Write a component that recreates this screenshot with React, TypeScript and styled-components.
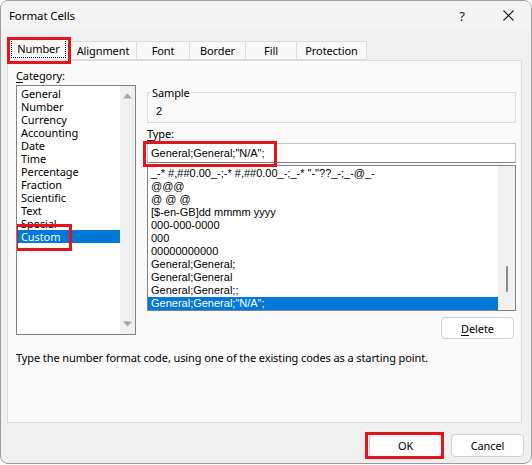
import React from 'react';
import styled, { createGlobalStyle } from 'styled-components';

const UI = `"Noto Sans", "Open Sans", sans-serif`;
const MS = `"Liberation Sans", Arial, sans-serif`;
const RED = '#e3141c';

const GlobalStyle = createGlobalStyle`
  html, body { margin: 0; padding: 0; background: #ffffff; }
  body { width: 532px; height: 465px; overflow: hidden; }
  * { box-sizing: border-box; }
`;

const Window = styled.div`
  width: 532px;
  height: 464px;
  border: 1px solid #9c9c9c;
  border-radius: 8px;
  background: #f0f0f0;
  display: flex;
  flex-direction: column;
  font-family: ${UI};
  font-size: 11px;
  letter-spacing: -0.1px;
  color: #000;
  overflow: hidden;
`;

const TitleBar = styled.div`
  height: 29px;
  display: flex;
  align-items: center;
  padding-left: 8px;
  background: #f3f3f3;
`;

const Title = styled.div`
  flex: 1;
  font-size: 11.5px;
  line-height: 15px;
`;

const CaptionButton = styled.div`
  width: 46px;
  height: 29px;
  display: flex;
  align-items: center;
  justify-content: center;
  font-size: 13px;
  color: #1a1a1a;
`;

const TabRow = styled.div`
  display: flex;
  align-items: flex-end;
  margin-left: 6px;
  padding-top: 7px;
`;

const Tab = styled.div<{ $w: number; $active?: boolean }>`
  position: relative;
  width: ${(p) => p.$w}px;
  height: ${(p) => (p.$active ? 24 : 19)}px;
  margin-bottom: ${(p) => (p.$active ? -1 : 0)}px;
  margin-right: -1px;
  z-index: ${(p) => (p.$active ? 2 : 1)};
  display: flex;
  align-items: center;
  justify-content: center;
  background: ${(p) => (p.$active ? '#f9f9f9' : '#f7f7f7')};
  border: 1px solid #dcdcdc;
  border-bottom: ${(p) => (p.$active ? 'none' : '1px solid #dcdcdc')};
  line-height: 15px;
  padding-bottom: ${(p) => (p.$active ? 2 : 0)}px;
`;

const FocusRect = styled.span`
  border: 1px dotted #000;
  padding: 1px 5px;
  line-height: 15px;
`;

const Annot = styled.span<{ $l: number; $t: number; $w: number; $h: number }>`
  position: absolute;
  left: ${(p) => p.$l}px;
  top: ${(p) => p.$t}px;
  width: ${(p) => p.$w}px;
  height: ${(p) => p.$h}px;
  border: 3px solid ${RED};
  pointer-events: none;
  z-index: 5;
`;

const Panel = styled.div`
  margin-left: 6px;
  width: 515px;
  height: 363px;
  border: 1px solid #dadada;
  background: #f9f9f9;
  padding: 7px 5px 0 8px;
  display: flex;
  flex-direction: column;
`;

const Columns = styled.div`
  display: grid;
  grid-template-columns: 120px 369px;
  column-gap: 11px;
`;

const Column = styled.div<{ $pt?: number }>`
  display: flex;
  flex-direction: column;
  padding-top: ${(p) => p.$pt ?? 0}px;
`;

const Label = styled.div<{ $mt?: number; $mb?: number }>`
  line-height: 15px;
  margin-top: ${(p) => p.$mt ?? 0}px;
  margin-bottom: ${(p) => p.$mb ?? 0}px;
`;

const U = styled.span`
  text-decoration: underline;
  text-underline-offset: 2px;
`;

const ListBox = styled.div<{ $h: number; $mt?: number }>`
  height: ${(p) => p.$h}px;
  margin-top: ${(p) => p.$mt ?? 0}px;
  border: 1px solid #828282;
  background: #fff;
  display: flex;
`;

const Items = styled.div<{ $font: 'ui' | 'ms'; $pt: number }>`
  flex: 1;
  display: flex;
  flex-direction: column;
  padding-top: ${(p) => p.$pt}px;
  font-family: ${(p) => (p.$font === 'ms' ? MS : UI)};
  font-size: 11px;
  letter-spacing: ${(p) => (p.$font === 'ms' ? '0' : '-0.1px')};
  overflow: hidden;
`;

const Item = styled.div<{ $sel?: boolean; $pl: number }>`
  position: relative;
  height: 13px;
  line-height: 13px;
  padding-left: ${(p) => p.$pl}px;
  white-space: pre;
  background: ${(p) => (p.$sel ? '#0078d7' : 'transparent')};
  color: ${(p) => (p.$sel ? '#fff' : '#000')};
`;

const ArrowTrack = styled.div`
  width: 15px;
  background: #f0f0f0;
  display: flex;
  flex-direction: column;
  justify-content: space-between;
  align-items: center;
  padding: 7px 0 7px;
`;

const SlimTrack = styled.div`
  width: 17px;
  background: #f0f0f0;
  display: flex;
  flex-direction: column;
  align-items: center;
  padding-top: 100px;
`;

const Thumb = styled.div`
  width: 2px;
  height: 26px;
  background: #8a8a8a;
  border-radius: 1px;
`;

const GroupBox = styled.fieldset`
  margin: 0;
  padding: 4px 8px 3px;
  border: 1px solid #dcdcdc;
  min-width: 0;
`;

const Legend = styled.legend`
  margin-left: -5px;
  padding: 0 1px;
  line-height: 15px;
`;

const SampleValue = styled.div`
  font-family: ${MS};
  font-size: 11px;
  line-height: 15px;
`;

const TextBoxWrap = styled.div`
  position: relative;
  margin-top: 2px;
`;

const TextBox = styled.div`
  height: 20px;
  border: 1px solid #c4c4c4;
  border-bottom-color: #7f7f7f;
  background: #fff;
  font-family: ${MS};
  font-size: 11px;
  letter-spacing: 0;
  line-height: 18px;
  padding-left: 3px;
`;

const ButtonRow = styled.div<{ $mt: number }>`
  display: flex;
  justify-content: flex-end;
  margin-top: ${(p) => p.$mt}px;
`;

const Button = styled.div<{ $w: number; $h: number }>`
  position: relative;
  width: ${(p) => p.$w}px;
  height: ${(p) => p.$h}px;
  border: 1px solid #d0d0d0;
  border-radius: 4px;
  background: #fdfdfd;
  display: flex;
  align-items: center;
  justify-content: center;
  line-height: 15px;
`;

const DeleteRow = styled(ButtonRow)`
  padding-right: 2px;
`;

const Description = styled.div`
  margin-top: 11px;
  line-height: 15px;
`;

const Footer = styled.div`
  display: flex;
  justify-content: flex-end;
  gap: 9px;
  padding: 11px 7px 0 0;
`;

const Arrow = ({ up }: { up?: boolean }) => (
  <svg width="9" height="6" viewBox="0 0 9 6">
    <polygon points={up ? '0,5.5 4.5,0.5 9,5.5' : '0,0.5 4.5,5.5 9,0.5'} fill="#a6a6a6" />
  </svg>
);

const CloseIcon = () => (
  <svg width="11" height="11" viewBox="0 0 11 11">
    <path d="M0.5 0.5 L10.5 10.5 M10.5 0.5 L0.5 10.5" stroke="#1a1a1a" strokeWidth="1.1" fill="none" />
  </svg>
);

const tabs = [
  { label: 'Number', w: 63, active: true },
  { label: 'Alignment', w: 68 },
  { label: 'Font', w: 54 },
  { label: 'Border', w: 57 },
  { label: 'Fill', w: 52 },
  { label: 'Protection', w: 71 },
];

const categories = [
  'General', 'Number', 'Currency', 'Accounting', 'Date', 'Time',
  'Percentage', 'Fraction', 'Scientific', 'Text', 'Special', 'Custom',
];

const types = [
  '_-* #,##0.00_-;-* #,##0.00_-;_-* "-"??_-;_-@_-',
  '@@@',
  '@ @ @',
  '[$-en-GB]dd mmmm yyyy',
  '000-000-0000',
  '000',
  '00000000000',
  'General;General;',
  'General;General',
  'General;General;;',
  'General;General;"N/A";',
];

export default function App() {
  return (
    <>
      <GlobalStyle />
      <Window>
        <TitleBar>
          <Title>Format Cells</Title>
          <CaptionButton>?</CaptionButton>
          <CaptionButton>
            <CloseIcon />
          </CaptionButton>
        </TitleBar>

        <TabRow>
          {tabs.map((t) => (
            <Tab key={t.label} $w={t.w} $active={t.active}>
              {t.active ? <FocusRect>{t.label}</FocusRect> : t.label}
              {t.active && <Annot $l={-1} $t={-1} $w={64} $h={27} />}
            </Tab>
          ))}
        </TabRow>

        <Panel>
          <Columns>
            <Column>
              <Label $mb={2}>
                <U>C</U>ategory:
              </Label>
              <ListBox $h={250}>
                <Items $font="ui" $pt={1}>
                  {categories.map((c) => (
                    <Item key={c} $pl={4} $sel={c === 'Custom'}>
                      {c}
                      {c === 'Custom' && <Annot $l={-2} $t={-6} $w={57} $h={27} />}
                    </Item>
                  ))}
                </Items>
                <ArrowTrack>
                  <Arrow up />
                  <Arrow />
                </ArrowTrack>
              </ListBox>
            </Column>

            <Column $pt={17}>
              <GroupBox>
                <Legend>Sample</Legend>
                <SampleValue>2</SampleValue>
              </GroupBox>
              <Label $mt={3}>
                <U>T</U>ype:
              </Label>
              <TextBoxWrap>
                <TextBox>General;General;"N/A";</TextBox>
                <Annot $l={-4} $t={-2} $w={134} $h={26} />
              </TextBoxWrap>
              <ListBox $h={146} $mt={2}>
                <Items $font="ms" $pt={1}>
                  {types.map((t, i) => (
                    <Item key={i} $pl={3} $sel={i === types.length - 1}>
                      {t}
                    </Item>
                  ))}
                </Items>
                <SlimTrack>
                  <Thumb />
                </SlimTrack>
              </ListBox>
              <DeleteRow $mt={6}>
                <Button $w={73} $h={22}>
                  <span>
                    <U>D</U>elete
                  </span>
                </Button>
              </DeleteRow>
            </Column>
          </Columns>
          <Description>
            Type the number format code, using one of the existing codes as a starting point.
          </Description>
        </Panel>

        <Footer>
          <Button $w={73} $h={23}>
            OK
            <Annot $l={-5} $t={-3} $w={79} $h={27} />
          </Button>
          <Button $w={73} $h={23}>Cancel</Button>
        </Footer>
      </Window>
    </>
  );
}
